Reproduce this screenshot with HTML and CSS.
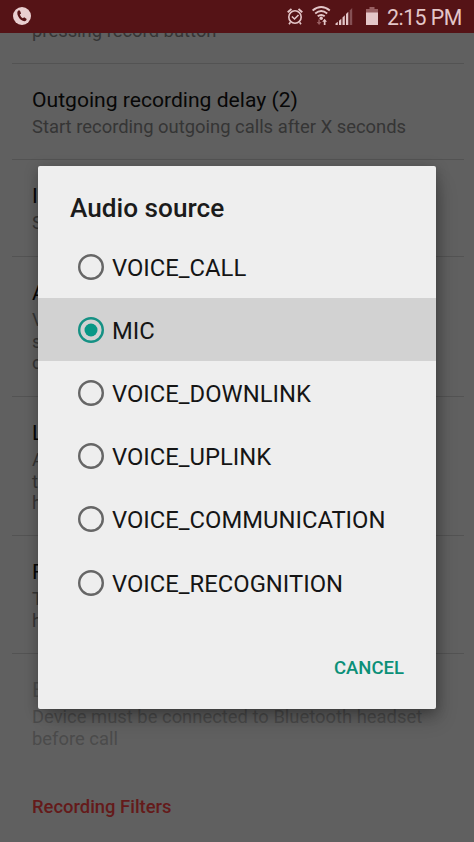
FILE: index.html
```html
<!DOCTYPE html>
<html lang="en">
<head>
<meta charset="utf-8">
<title>Audio source</title>
<link rel="stylesheet" href="styles.css">
</head>
<body>
<div class="screen">
  <header class="status">
    <svg class="call" width="18" height="18" viewBox="0 0 18 18"><circle cx="9" cy="9" r="9" fill="#e9cfd0"/><path d="M5.2 3.6 6.9 3.5 8.1 6.4 6.8 7.4Q7.6 9.8 9.8 11.3L11.2 10.3 13.7 12 13.1 13.6Q11.8 14.8 9.7 13.8 5.6 11.7 4.4 7.2 3.9 4.9 5.2 3.6Z" fill="#551316"/></svg>
    <svg class="icons" width="96" height="22" viewBox="286 5 96 22">
      <g fill="none" stroke="#e4c6c8" stroke-width="1.6">
        <circle cx="295" cy="17" r="6.2"/><path d="M291.900 16.500 294.500 19 298.500 15M290.400 22.300 289 24.300M299.600 22.300 301 24.300"/><path d="M287.700 12.300 291.500 9M302.300 12.300 298.500 9" stroke-width="1.8"/>
        <path d="M312.600 10.500Q321.200 3.500 329.800 10.500M315.200 13.500Q321.200 8.700 327.200 13.500M317.700 16.300Q321.200 13.600 324.700 16.300" stroke-width="1.9"/>
      </g>
      <circle cx="321.200" cy="18.200" r="1.700" fill="#e4c6c8"/>
      <path d="M318.300 19.500h1.500v2.500h1.700l-2.400 3-2.400-3h1.600z" fill="#985f62"/>
      <path d="M323.800 25h1.700v-3.200h1.500l-2.400-3-2.400 3h1.600z" fill="#e4c6c8"/>
      <path d="M335.500 25v-1.500l2.300-1.700v3.200zM339 25v-4.300l2.300-1.900v6.200zM342.500 25v-7.500l2.300-2.200v9.700zM346 25v-11l2.300-2.300v13.300z" fill="#e4c6c8"/>
      <path d="M349.700 25v-14.500l2.500-2.500v17z" fill="#855054"/>
      <path d="M366 9h3.500v-2h5v2h3.500v4h-12z" fill="#985f62"/><path d="M366 12.500h12v12.500h-12z" fill="#e4c6c8"/>
    </svg>
    <span class="time">2:15 PM</span>
  </header>
  <main class="settings">
    <section class="row first"><p class="summary">pressing record button</p></section>
    <section class="row r1"><h2>Outgoing recording delay (2)</h2><p class="summary">Start recording outgoing calls after X seconds</p></section>
    <section class="row r2"><h2>I</h2><p class="summary">S</p></section>
    <section class="row r3"><h2>A</h2><p class="summary">V<br>s<br>c</p></section>
    <section class="row r4"><h2>L</h2><p class="summary">A<br>t<br>h</p></section>
    <section class="row r5"><h2>F</h2><p class="summary">T<br>h</p></section>
    <section class="row r6"><h2>E</h2><p class="summary">Device must be connected to Bluetooth headset<br>before call</p></section>
    <h3>Recording Filters</h3>
  </main>
  <div class="dialog" role="dialog">
    <h1>Audio source</h1>
    <ul>
      <li><svg class="radio" viewBox="0 0 26 26"><circle cx="13" cy="13" r="11.8"/></svg><span>VOICE_CALL</span></li>
      <li class="selected"><svg class="radio" viewBox="0 0 26 26"><circle cx="13" cy="13" r="11.8"/><circle class="dot" cx="13" cy="13" r="6.5"/></svg><span>MIC</span></li>
      <li><svg class="radio" viewBox="0 0 26 26"><circle cx="13" cy="13" r="11.8"/></svg><span>VOICE_DOWNLINK</span></li>
      <li><svg class="radio" viewBox="0 0 26 26"><circle cx="13" cy="13" r="11.8"/></svg><span>VOICE_UPLINK</span></li>
      <li><svg class="radio" viewBox="0 0 26 26"><circle cx="13" cy="13" r="11.8"/></svg><span>VOICE_COMMUNICATION</span></li>
      <li><svg class="radio" viewBox="0 0 26 26"><circle cx="13" cy="13" r="11.8"/></svg><span>VOICE_RECOGNITION</span></li>
    </ul>
    <button>CANCEL</button>
  </div>
</div>
</body>
</html>
```
FILE: styles.css
```css
* { box-sizing: border-box; margin: 0; padding: 0; }
body { font-family: Roboto, sans-serif; background: #606060; }
.screen { position: relative; width: 474px; height: 842px; overflow: hidden; background: #606060; }
.status { position: relative; z-index: 1; display: flex; align-items: flex-start; height: 33px; padding: 0 0 0 13px; background: #551316; color: #e4c6c8; }
.status svg { flex-shrink: 0; }
.call { margin-top: 7px; }
.icons { margin: 5px 0 0 255px; }
.time { margin-left: 5px; line-height: 35px; font-size: 21.3px; letter-spacing: -.5px; white-space: nowrap; }
.settings { padding: 0 10px 0 12px; }
.row { display: flex; flex-direction: column; padding: 22px 0 0 20px; border-bottom: 1px solid #535353; white-space: nowrap; }
.row h2 { height: 30px; font-size: 21.1px; line-height: 28px; font-weight: 400; color: #070707; }
.summary { font-size: 18.4px; line-height: 21.6px; color: #353535; }
.first { height: 31px; padding-top: 0; }
.first .summary { margin-top: -13px; }
.r1 { height: 96px; }
.r2 { height: 97px; }
.r3 { height: 140px; }
.r4 { height: 139px; }
.r5 { height: 118px; }
.r6 { height: 138px; border: 0; }
.r6 h2, .r6 .summary { color: #4b4b4b; }
.settings h3 { padding-left: 20px; font-size: 18.4px; line-height: 30px; font-weight: 500; color: #641a1a; }
.dialog { position: absolute; left: 38px; top: 166px; width: 398px; height: 543px; display: flex; flex-direction: column; border-radius: 2px; background: #eee; box-shadow: 6px 14px 18px -4px rgba(0,0,0,.22), 0 3px 14px rgba(0,0,0,.27); }
.dialog h1 { height: 69px; padding: 23px 0 0 32px; font-size: 26.2px; line-height: 38px; font-weight: 500; color: #1b1b1b; }
.dialog ul { list-style: none; }
.dialog li { display: flex; align-items: center; height: 63.2px; padding-left: 40px; font-size: 23.8px; color: #151515; }
.dialog li span { padding-top: 2px; }
.radio { width: 26px; height: 26px; margin-right: 8px; fill: none; stroke: #666; stroke-width: 2.4; }
.dialog .selected { background: #d2d2d2; }
.selected .radio { stroke: #159184; }
.selected .dot { fill: #089786; stroke: none; }
.dialog button { align-self: flex-end; margin: 35px 32px 0 0; border: 0; background: none; font: 500 18.5px/38px Roboto, sans-serif; color: #0b9078; }
```
